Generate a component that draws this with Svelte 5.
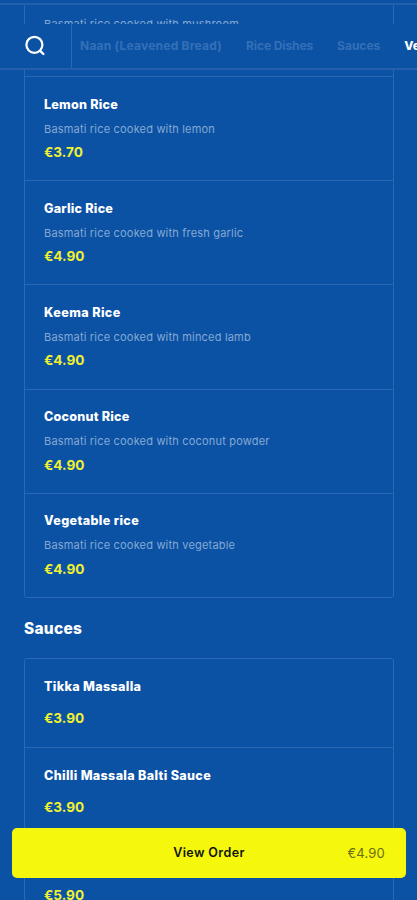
<script lang="ts">
  type Item = { name: string; description?: string; price: string; tracking?: number };
  type Section = { title?: string; items: Item[] };

  const tabs = [
    { label: 'Naan (Leavened Bread)', tracking: 0.23 },
    { label: 'Rice Dishes', tracking: -0.1 },
    { label: 'Sauces', tracking: 0 },
    { label: 'Vegetable Side Dishes', tracking: 0 },
  ];

  const sections: Section[] = [
    {
      items: [
        { name: 'Mushroom Rice', description: 'Basmati rice cooked with mushroom', price: '4.90' },
        { name: 'Lemon Rice', description: 'Basmati rice cooked with lemon', price: '3.70' },
        { name: 'Garlic Rice', description: 'Basmati rice cooked with fresh garlic', price: '4.90' },
        { name: 'Keema Rice', description: 'Basmati rice cooked with minced lamb', price: '4.90', tracking: 0.4 },
        { name: 'Coconut Rice', description: 'Basmati rice cooked with coconut powder', price: '4.90' },
        { name: 'Vegetable rice', description: 'Basmati rice cooked with vegetable', price: '4.90', tracking: 0.35 },
      ],
    },
    {
      title: 'Sauces',
      items: [
        { name: 'Tikka Massalla', price: '3.90', tracking: 0.32 },
        { name: 'Chilli Massala Balti Sauce', price: '3.90', tracking: 0.32 },
        { name: 'Korma Sauce', price: '5.90' },
      ],
    },
  ];

  let activeTab = $state('Vegetable Side Dishes');
</script>

<div class="screen">
  <div class="topbar"></div>

  <nav class="categories">
    <button class="search" aria-label="Search">
      <svg viewBox="0 0 22 22" width="22" height="22" fill="none" stroke="currentColor">
        <circle cx="9.4" cy="9.8" r="8" stroke-width="2.2" />
        <path d="M15.2 15.8l3.2 3.2" stroke-width="2.4" stroke-linecap="round" />
      </svg>
    </button>
    <div class="tabs">
      {#each tabs as tab}
        <button
          class="tab"
          class:active={tab.label === activeTab}
          style:letter-spacing="{tab.tracking}px"
          onclick={() => (activeTab = tab.label)}
        >
          {tab.label}
        </button>
      {/each}
    </div>
  </nav>

  <main class="menu">
    {#each sections as section}
      {#if section.title}
        <h2>{section.title}</h2>
      {/if}
      <ul class="card">
        {#each section.items as item}
          <li class="item" class:short={!item.description}>
            <h3 style:letter-spacing="{item.tracking ?? 0.22}px">{item.name}</h3>
            {#if item.description}
              <p class="description">{item.description}</p>
            {/if}
            <p class="price">€{item.price}</p>
          </li>
        {/each}
      </ul>
    {/each}
  </main>

  <button class="order">
    <span class="order-label">View Order</span>
    <span class="order-total">€4.90</span>
  </button>
</div>

<style>
  :global(body) {
    margin: 0;
    background: #0b52a5;
  }

  .screen {
    --line: #2b67b3;
    position: relative;
    height: 900px;
    overflow: hidden;
    background: #0b52a5;
    color: #fff;
    font-family: Inter, 'Open Sans', sans-serif;
  }

  button {
    padding: 0;
    border: 0;
    background: none;
    color: inherit;
    font: inherit;
    cursor: pointer;
  }

  .topbar {
    position: absolute;
    inset: 0 0 auto;
    z-index: 1;
    box-sizing: border-box;
    height: 5px;
    border-bottom: 2px solid #235fad;
    background: #0b52a5;
  }

  .categories {
    position: absolute;
    inset: 24px 0 auto;
    z-index: 1;
    display: flex;
    box-sizing: border-box;
    height: 46px;
    border-bottom: 2px solid #235fad;
    background: #0b52a5;
  }

  .search {
    display: grid;
    flex: 0 0 72px;
    place-items: center;
    box-sizing: border-box;
    border-right: 1px solid var(--line);
  }

  .search svg {
    display: block;
  }

  .tabs {
    display: flex;
    gap: 24px;
    padding-left: 8px;
    overflow: hidden;
  }

  .tab {
    flex: none;
    padding-bottom: 1px;
    color: #3570b7;
    font-size: 12px;
    font-weight: 700;
    white-space: nowrap;
  }

  .tab.active {
    color: #fff;
    font-weight: 800;
  }

  .menu {
    margin-top: -29px;
    padding: 0 23px 0 24px;
  }

  h2,
  h3,
  p,
  ul {
    margin: 0;
    padding: 0;
  }

  h2 {
    margin: 19.4px 0 17px;
    font-size: 15.5px;
    font-weight: 800;
    letter-spacing: 0.25px;
    line-height: 24px;
  }

  .card {
    border: 1px solid var(--line);
    border-radius: 3px;
    list-style: none;
  }

  .item {
    box-sizing: border-box;
    height: 104.15px;
    padding: 17.6px 19px 0;
  }

  .item + .item {
    border-top: 1px solid var(--line);
  }

  .item.short {
    height: 88px;
  }

  h3 {
    font-size: 12.6px;
    font-weight: 800;
    line-height: 20px;
  }

  .description {
    margin-top: 4px;
    color: #85a9d3;
    font-size: 11px;
    letter-spacing: 0.19px;
    line-height: 20px;
  }

  .price {
    margin-top: 3.4px;
    color: #f0f032;
    font-size: 13.6px;
    font-weight: 700;
    line-height: 20px;
  }

  .short .price {
    margin-top: 11px;
  }

  .order {
    position: absolute;
    inset: auto 11px 22px 12px;
    z-index: 1;
    display: grid;
    grid-template-columns: 1fr auto 1fr;
    align-items: center;
    height: 50px;
    padding: 0 21px;
    border-radius: 5px;
    background: #f5f70d;
    color: #11130a;
    font-size: 12.5px;
    line-height: 20px;
  }

  .order-label {
    grid-column: 2;
    font-weight: 600;
    letter-spacing: 0.4px;
  }

  .order-total {
    justify-self: end;
    color: #6c6d10;
    font-size: 13px;
    letter-spacing: 0.2px;
  }
</style>
